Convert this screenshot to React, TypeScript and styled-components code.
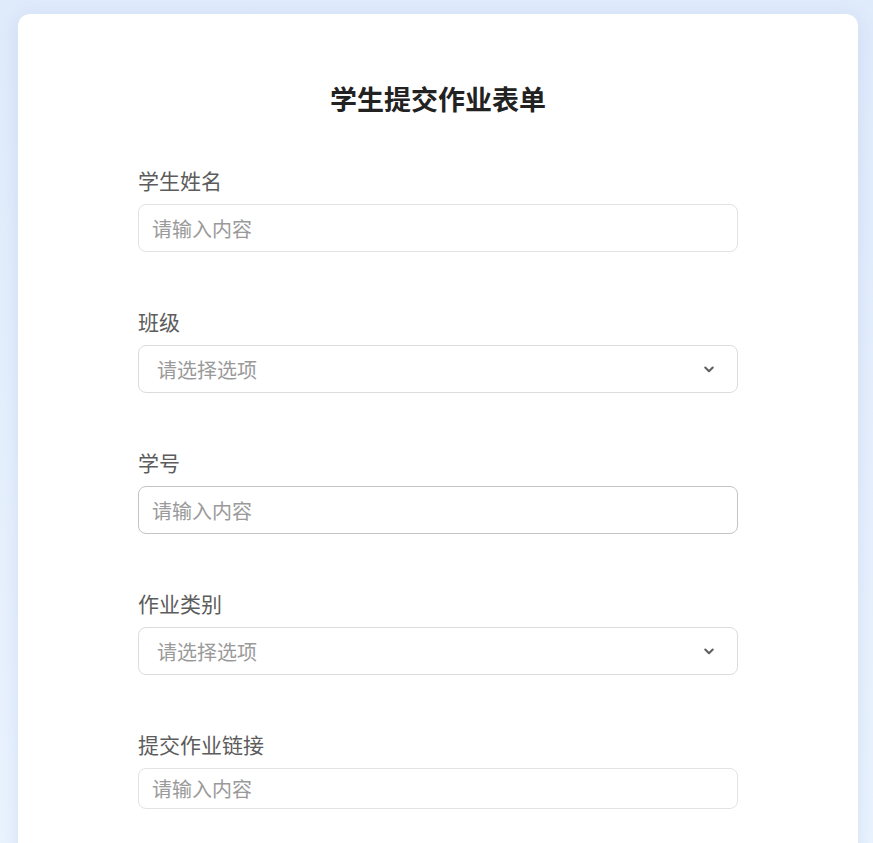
import React from "react";
import styled, { createGlobalStyle } from "styled-components";

const GlobalStyle = createGlobalStyle`
  * { box-sizing: border-box; }
  html, body { margin: 0; padding: 0; }
  body {
    min-height: 100vh;
    background: linear-gradient(180deg, #dfeafb 0%, #e6f0fd 60%, #eaf3fe 100%);
    font-family: "Noto Sans CJK SC", "Noto Sans", sans-serif;
  }
`;

const Page = styled.div`
  padding: 14px 15px 0 18px;
`;

const Card = styled.div`
  width: 840px;
  min-height: 840px;
  background: #ffffff;
  border-radius: 12px;
  box-shadow: 0 4px 18px rgba(120, 150, 200, 0.18);
  padding: 67px 120px 40px;
`;

const Title = styled.h1`
  margin: 0 0 50px;
  text-align: center;
  font-size: 27px;
  line-height: 36px;
  font-weight: 700;
  color: #222222;
`;

const Field = styled.div`
  display: flex;
  flex-direction: column;
  gap: 11px;
  margin-bottom: 56px;
`;

const Label = styled.label`
  font-size: 21px;
  line-height: 26px;
  color: #5c5c5c;
`;

const TextInput = styled.input<{ $strong?: boolean; $h?: number }>`
  width: 600px;
  height: ${(p) => p.$h ?? 48}px;
  border: 1px solid ${(p) => (p.$strong ? "#c4c4c4" : "#e3e3e3")};
  border-radius: 8px;
  padding: 0 13px;
  font-family: inherit;
  font-size: 20px;
  color: #333;
  outline: none;
  background: #fff;
  &::placeholder { color: #9a9a9a; }
`;

const SelectWrap = styled.div`
  position: relative;
  width: 600px;
  height: 48px;
`;

const Select = styled.select`
  appearance: none;
  width: 100%;
  height: 100%;
  border: 1px solid #dcdcdc;
  border-radius: 8px;
  padding: 0 18px;
  font-family: inherit;
  font-size: 20px;
  color: #9a9a9a;
  background: #fff;
  outline: none;
`;

const Chevron = styled.svg`
  position: absolute;
  right: 20px;
  top: 50%;
  transform: translateY(-50%);
  pointer-events: none;
`;

const ChevronIcon = () => (
  <Chevron width="18" height="18" viewBox="0 0 24 24" fill="none" stroke="#606060" strokeWidth="2.8" strokeLinecap="round" strokeLinejoin="round">
    <path d="M7 10l5 5 5-5" />
  </Chevron>
);

const SelectField = ({ label }: { label: string }) => (
  <Field>
    <Label>{label}</Label>
    <SelectWrap>
      <Select defaultValue="">
        <option value="" disabled>请选择选项</option>
      </Select>
      <ChevronIcon />
    </SelectWrap>
  </Field>
);

const InputField = ({ label, strong, h }: { label: string; strong?: boolean; h?: number }) => (
  <Field>
    <Label>{label}</Label>
    <TextInput placeholder="请输入内容" $strong={strong} $h={h} />
  </Field>
);

export default function App() {
  return (
    <>
      <GlobalStyle />
      <Page>
        <Card>
          <Title>学生提交作业表单</Title>
          <InputField label="学生姓名" />
          <SelectField label="班级" />
          <InputField label="学号" strong />
          <SelectField label="作业类别" />
          <InputField label="提交作业链接" h={41} />
        </Card>
      </Page>
    </>
  );
}
